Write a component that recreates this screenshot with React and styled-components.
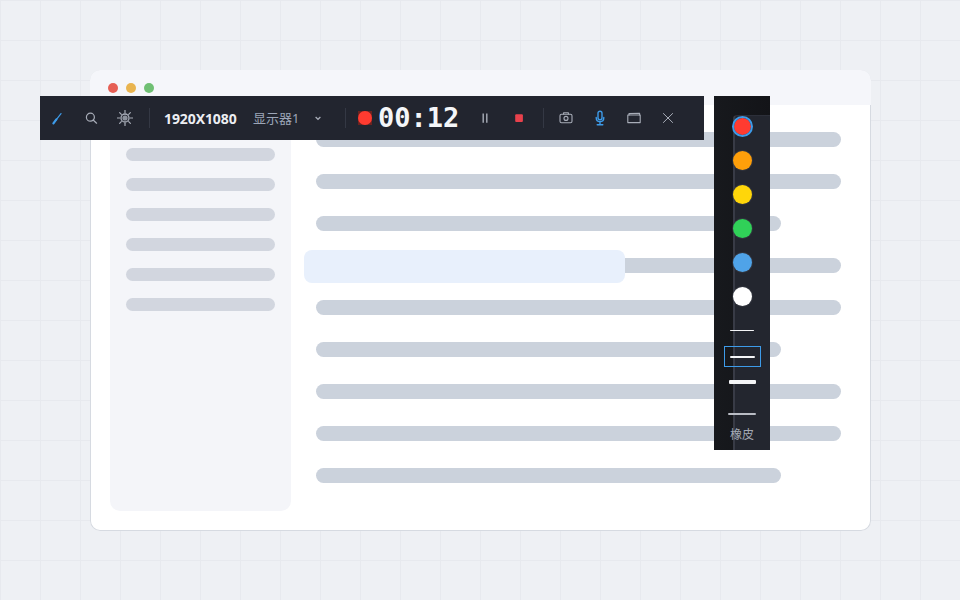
import React from 'react';
import styled, { createGlobalStyle } from 'styled-components';

const Global = createGlobalStyle`
  html, body { margin: 0; padding: 0; }
  body { font-family: "Noto Sans", "Noto Sans CJK SC", sans-serif; }
`;

const Stage = styled.div`
  position: relative;
  width: 960px;
  height: 600px;
  overflow: hidden;
  box-sizing: border-box;
  padding: 70px 89px 69px 90px;
  background-color: #eef0f4;
  background-image:
    linear-gradient(#e7e9ee 1px, transparent 1px),
    linear-gradient(90deg, #e7e9ee 1px, transparent 1px);
  background-size: 40px 40px;
`;

const Window = styled.div`
  height: 100%;
  box-sizing: border-box;
  display: flex;
  flex-direction: column;
  background: #fff;
  border-radius: 10px;
  box-shadow: inset 0 0 0 1px #d6dae1;
  overflow: hidden;
`;

const TitleBar = styled.div`
  height: 35px;
  flex: none;
  display: flex;
  align-items: center;
  gap: 8px;
  box-sizing: border-box;
  padding: 0 0 0 18px;
  background: #f5f6fa;
`;

const Light = styled.span`
  width: 10px;
  height: 10px;
  border-radius: 50%;
  background: ${p => p.$color};
  margin-top: 1px;
`;

const WindowBody = styled.div`
  flex: 1;
  display: flex;
  gap: 25px;
  padding: 0 30px 20px 20px;
  min-height: 0;
`;

const Sidebar = styled.div`
  width: 181px;
  flex: none;
  display: flex;
  flex-direction: column;
  gap: 17px;
  box-sizing: border-box;
  padding: 13px 16px 0;
  background: #f4f5f9;
  border-radius: 0 0 10px 10px;
`;

const SideRow = styled.div`
  width: 149px;
  height: 13px;
  border-radius: 7px;
  background: #d2d6df;
`;

const Main = styled.div`
  position: relative;
  flex: 1;
  display: flex;
  flex-direction: column;
  gap: 27px;
  padding-top: 27px;
`;

const Line = styled.div`
  width: ${p => (p.$short ? 465 : 525)}px;
  height: 15px;
  border-radius: 8px;
  background: #cbd2dc;
`;

const Highlight = styled.div`
  position: absolute;
  left: -12px;
  top: 145px;
  width: 321px;
  height: 33px;
  border-radius: 8px;
  background: #e8f0fc;
`;

const Toolbar = styled.div`
  position: absolute;
  left: 40px;
  top: 96px;
  width: 664px;
  height: 44px;
  display: flex;
  align-items: center;
  background: #22252f;
`;

const Slot = styled.div`
  width: 34px;
  height: 44px;
  flex: none;
  display: flex;
  align-items: center;
  justify-content: center;
  color: ${p => (p.$active ? '#3d9be9' : '#a8adb8')};
`;

const Divider = styled.div`
  width: 1px;
  height: 20px;
  flex: none;
  margin: 0 ${p => p.$right}px 0 ${p => p.$left}px;
  background: #343844;
`;

const Resolution = styled.div`
  width: 73px;
  margin-right: 16px;
  flex: none;
  font-size: 14px;
  font-weight: 700;
  letter-spacing: -0.1px;
  color: #eceef2;
  white-space: nowrap;
`;

const Monitor = styled.div`
  width: 46px;
  margin-right: 11px;
  padding-bottom: 2px;
  flex: none;
  font-size: 13px;
  color: #9ca6b8;
  white-space: nowrap;
`;

const Chevron = styled.div`
  width: 16px;
  margin-right: 19px;
  flex: none;
  display: flex;
  justify-content: center;
  color: #a8adb8;
`;

const RecDot = styled.span`
  width: 14px;
  height: 14px;
  flex: none;
  margin-right: 6px;
  background: #6a2320;
  display: flex;
  align-items: center;
  justify-content: center;
  &::before {
    content: '';
    width: 14px;
    height: 14px;
    border-radius: 50%;
    background: #ff3b30;
  }
`;

const Timer = styled.div`
  width: 80px;
  margin-right: 10px;
  flex: none;
  font-family: "DejaVu Sans Mono", monospace;
  font-size: 27px;
  font-weight: 700;
  color: #f4f6f9;
  line-height: 46px;
  white-space: nowrap;
`;

const SidePanel = styled.div`
  position: absolute;
  left: 714px;
  top: 96px;
  width: 56px;
  height: 354px;
  display: flex;
  flex-direction: column;
  align-items: center;
  background: linear-gradient(90deg, #17191d, #131418);
`;

const PanelBack = styled.div`
  position: absolute;
  left: 19px;
  right: 0;
  top: 19px;
  bottom: 0;
  background: #23262f;
  border-left: 2px solid #383b46;
  border-top: 1px solid #2c2f39;
  border-top-left-radius: 4px;
  box-sizing: border-box;
`;

const Swatches = styled.div`
  position: relative;
  margin-top: 13px;
  display: flex;
  flex-direction: column;
  align-items: center;
`;

const SwatchCell = styled.div`
  width: 22px;
  height: 34px;
  display: flex;
  align-items: center;
  justify-content: center;
`;

const Swatch = styled.span`
  box-sizing: border-box;
  width: ${p => (p.$selected ? 21 : 19)}px;
  height: ${p => (p.$selected ? 21 : 19)}px;
  border-radius: 50%;
  background: ${p => p.$color};
  background-clip: padding-box;
  border: ${p => (p.$selected ? '2px solid #3d9be9' : 'none')};
  box-shadow: ${p => (p.$selected ? 'none' : '0 0 0 1px rgba(58, 61, 72, 0.6)')};
`;

const Strokes = styled.div`
  position: relative;
  margin-top: 7px;
  display: flex;
  flex-direction: column;
  align-items: center;
`;

const StrokeCell = styled.div`
  box-sizing: border-box;
  width: 37px;
  height: ${p => p.$h}px;
  margin-bottom: ${p => p.$mb || 0}px;
  display: flex;
  align-items: center;
  justify-content: center;
  border: 1px solid ${p => (p.$selected ? '#3d9be9' : 'transparent')};
`;

const Stroke = styled.span`
  width: ${p => p.$w}px;
  height: ${p => p.$t}px;
  background: ${p => p.$color || '#f4f5f7'};
  border-radius: 1px;
`;

const EraserCell = styled.div`
  width: 37px;
  height: 2px;
  display: flex;
  justify-content: center;
`;

const EraserLabel = styled.div`
  position: relative;
  margin-top: 12px;
  font-size: 12px;
  line-height: 16px;
  color: #a4a9b4;
`;

const Icon = ({ children, sw = 1.2 }) => (
  <svg width="16" height="16" viewBox="0 0 16 16" fill="none" stroke="currentColor" strokeWidth={sw} strokeLinecap="round" strokeLinejoin="round">
    {children}
  </svg>
);

const lines = [0, 0, 1, 0, 0, 1, 0, 0, 1];
const swatches = ['#ff3b30', '#ff9f0a', '#ffd60a', '#30d158', '#4fa3e8', '#ffffff'];
const rays = [0, 45, 90, 135, 180, 225, 270, 315];

export default function App() {
  return (
    <Stage>
      <Global />
      <Window>
        <TitleBar>
          <Light $color="#e65f55" />
          <Light $color="#e9b44f" />
          <Light $color="#6fbf73" />
        </TitleBar>
        <WindowBody>
          <Sidebar>
            {[0, 1, 2, 3, 4, 5, 6].map(i => <SideRow key={i} />)}
          </Sidebar>
          <Main>
            {lines.map((s, i) => <Line key={i} $short={!!s} />)}
            <Highlight />
          </Main>
        </WindowBody>
      </Window>

      <Toolbar>
        <Slot $active>
          <Icon>
            <path d="M4.6 13.2 12 3.6" strokeWidth="1.2" />
            <path d="M4.4 13.4 7.4 9.4" strokeWidth="2.2" />
          </Icon>
        </Slot>
        <Slot>
          <Icon><circle cx="7.4" cy="7.2" r="4" /><path d="M10.4 10.2 13.6 13.2" /></Icon>
        </Slot>
        <Slot>
          <Icon>
            <circle cx="8" cy="8" r="4" strokeWidth="1.3" />
            <circle cx="8" cy="8" r="2.6" fill="currentColor" stroke="none" opacity="0.8" />
            {rays.map(a => <path key={a} d="M8 2.8V0.4" transform={`rotate(${a} 8 8)`} />)}
          </Icon>
        </Slot>
        <Divider $left={7} $right={14} />
        <Resolution>1920X1080</Resolution>
        <Monitor>显示器1</Monitor>
        <Chevron>
          <svg width="10" height="10" viewBox="0 0 10 10" fill="none" stroke="currentColor" strokeWidth="1.2"><path d="M2.6 4 5 6.3 7.4 4" /></svg>
        </Chevron>
        <Divider $left={0} $right={12} />
        <RecDot />
        <Timer>00:12</Timer>
        <Slot>
          <Icon sw={1.4}><path d="M6.2 3.6V12.7M9.8 3.6V12.7" strokeLinecap="butt" /></Icon>
        </Slot>
        <Slot>
          <svg width="16" height="16" viewBox="0 0 16 16"><rect x="4.2" y="4.2" width="7.7" height="7.7" rx="1" fill="#e8414c" /></svg>
        </Slot>
        <Divider $left={7} $right={5} />
        <Slot>
          <Icon sw={1.1}>
            <rect x="2" y="4.2" width="12" height="8.6" rx="1.5" />
            <path d="M5.6 4V2.8H10.4V4" />
            <circle cx="8" cy="8.4" r="2" />
          </Icon>
        </Slot>
        <Slot $active>
          <Icon sw={1.4}>
            <rect x="6" y="1.2" width="4" height="8.6" rx="2" />
            <path d="M4.2 7.5C4.2 10.4 6 11.7 8 11.7S11.8 10.4 11.8 7.5M8 11.7V14.4M5.2 14.8H10.8" />
          </Icon>
        </Slot>
        <Slot>
          <Icon sw={1.1}>
            <path d="M1.8 5H14.2V12.6H1.8Z" />
            <path d="M3 5V3.6L13.6 3.2V5" />
          </Icon>
        </Slot>
        <Slot>
          <Icon sw={1}><path d="M3.4 3.5 12.6 12.5M12.6 3.5 3.4 12.5" /></Icon>
        </Slot>
      </Toolbar>

      <SidePanel>
        <PanelBack />
        <Swatches>
          {swatches.map((c, i) => (
            <SwatchCell key={c}><Swatch $color={c} $selected={i === 0} /></SwatchCell>
          ))}
        </Swatches>
        <Strokes>
          <StrokeCell $h={21} $mb={5}><Stroke $w={24} $t={1} /></StrokeCell>
          <StrokeCell $h={21} $mb={5} $selected><Stroke $w={25} $t={2} /></StrokeCell>
          <StrokeCell $h={20} $mb={21}><Stroke $w={27} $t={4} /></StrokeCell>
          <EraserCell><Stroke $w={28} $t={2} $color="#b9bcc4" /></EraserCell>
        </Strokes>
        <EraserLabel>橡皮</EraserLabel>
      </SidePanel>
    </Stage>
  );
}
